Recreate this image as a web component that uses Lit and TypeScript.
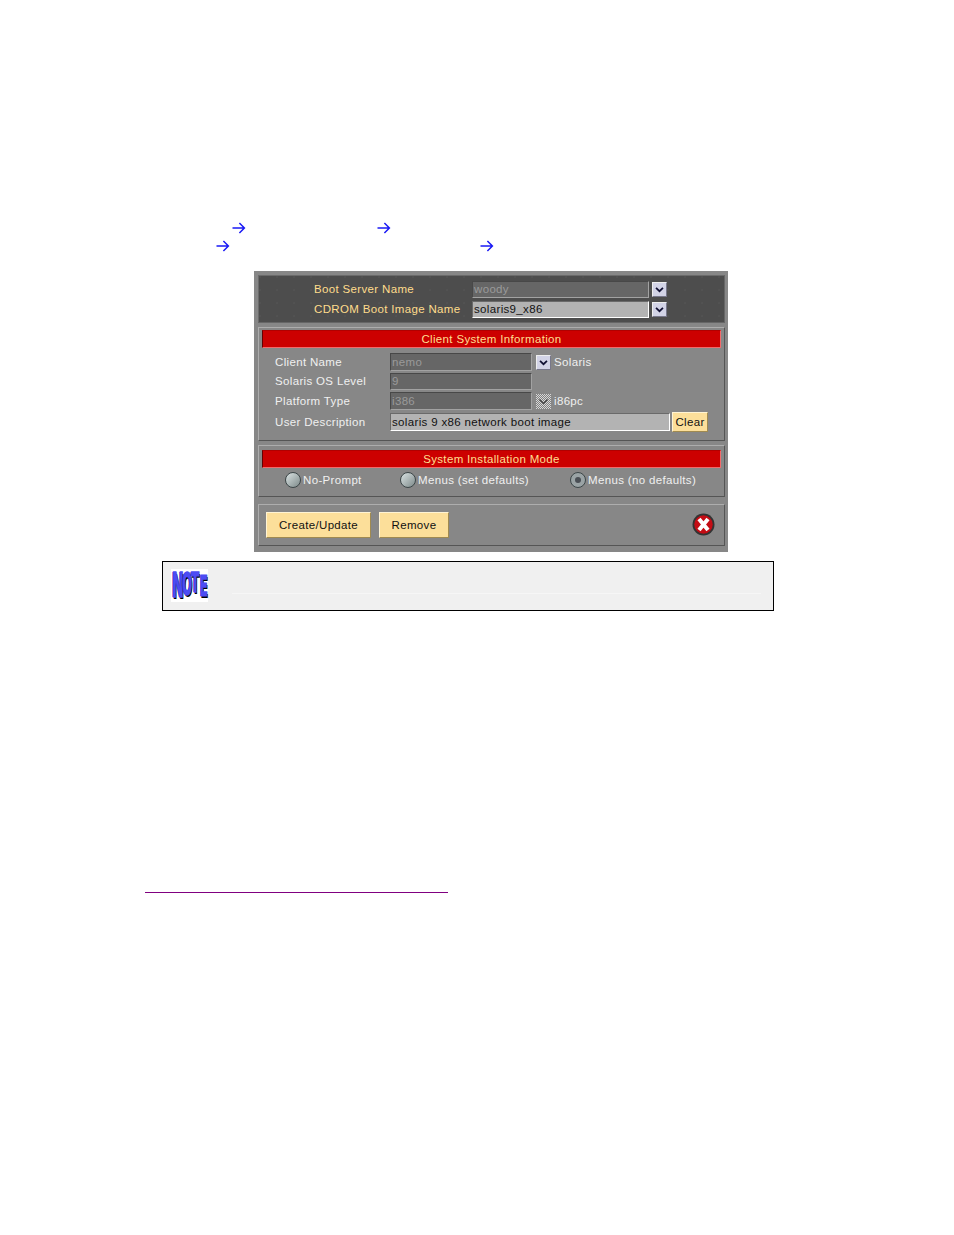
import { LitElement, html, css, svg } from "lit";
import { customElement } from "lit/decorators.js";

const arrow = html`<svg class="arrow" width="14" height="14" viewBox="0 0 14 14"><path d="M0.5 7H12M7.4 2L12.4 7L7.4 12" fill="none" stroke="#1a1af5" stroke-width="1.5"/></svg>`;
const chevron = svg`<path d="M3.5 5.5L7.5 9.5L11.5 5.5" fill="none" stroke="#111133" stroke-width="2"/>`;
const chevronOff = svg`<path d="M3.5 5.5L7.5 9.5L11.5 5.5" fill="none" stroke="#444" stroke-width="1.2"/>`;

@customElement("app-root")
export class AppRoot extends LitElement {
  static styles = css`
    :host { display: block; height: 1235px; background: #fff; font-family: "Liberation Sans", Arial, sans-serif; overflow: hidden; }
    .arrows { display: flex; height: 18px; align-items: center; }
    .arrows.first { margin-top: 219px; padding-left: 232px; gap: 131px; }
    .arrows.second { padding-left: 216px; gap: 250px; }
    .arrow { display: block; flex: none; }
    .dialog { box-sizing: border-box; width: 474px; height: 281px; margin: 16px 0 0 254px; background: #878787; padding: 4px 3px 6px 4px; display: flex; flex-direction: column; font-size: 11.5px; letter-spacing: 0.34px; color: #f0f0f0; }
    .panel { box-sizing: border-box; border: 1px solid; border-color: #adadad #555 #555 #adadad; flex: none; }
    .server { height: 48px; background-color: #4d4d4d; background-image: radial-gradient(circle at 1px 1px, #555 0.5px, transparent 1px); background-size: 17px 13px; border-color: #6b6b6b #666 #666 #6b6b6b; padding: 5px 0 0 55px; display: flex; flex-direction: column; gap: 3px; color: #ffdc8c; margin-bottom: 4px; }
    .server .row { display: flex; align-items: center; height: 17px; }
    .server .lab { width: 158px; flex: none; margin-top: -1px; }
    .server .field { width: 177px; height: 17px; line-height: 14px; }
    .server .drop { margin-left: 3px; }
    .client { height: 114px; margin-bottom: 4px; padding: 2px 3px 0; }
    .mode { height: 52px; margin-bottom: 7px; padding: 4px 3px 0; }
    .actions { height: 42px; display: flex; align-items: center; padding: 0 9px 0 7px; gap: 8px; }
    .bar { height: 18px; background: #cc0000; color: #ffdf90; text-align: center; line-height: 17px; border: 1px solid; border-color: #b00000 #f36a6a #f36a6a #600; box-sizing: border-box; }
    .rows { display: flex; flex-direction: column; gap: 2px; margin-top: 5px; padding-left: 13px; }
    .row { display: flex; align-items: center; }
    .client .row { height: 18px; }
    .client .row.short { height: 17px; }
    .client .row.short .field { height: 17px; line-height: 15px; }
    .client .row.short .lab { margin-top: -1px; }
    .client .row.desc { height: 20px; }
    .client .lab { width: 115px; flex: none; }
    .client .field { width: 142px; }
    .client .drop { margin: 0 3px 0 4px; }
    .field { box-sizing: border-box; height: 18px; line-height: 16px; padding-left: 1px; border: 1px solid; white-space: nowrap; overflow: hidden; }
    .off { background: #666; color: #9a9a9a; border-color: #484848 #a2a2a2 #a2a2a2 #484848; }
    .on { background: #b3b3b3; color: #111; border-color: #6a6a6a #fff #fff #6a6a6a; }
    .client .field.wide { width: 280px; }
    .drop { box-sizing: border-box; width: 15px; height: 15px; flex: none; background: #d2d3e6; border: 1px solid; border-color: #eee #77778a #77778a #eee; display: block; }
    .drop.dis { background: repeating-conic-gradient(#808080 0 25%, #d8d8d8 0 50%) 0 0 / 2px 2px; border: 0; }
    .btn { box-sizing: border-box; background: #fcdf9a; color: #111; border: 1px solid; border-color: #fff4d4 #a08a50 #a08a50 #fff4d4; display: flex; align-items: center; justify-content: center; flex: none; }
    .clear { width: 36px; height: 20px; margin-left: 2px; }
    .create { width: 105px; height: 26px; }
    .remove { width: 70px; height: 26px; }
    .close { margin: 0 0 2px auto; display: block; }
    .radios { display: flex; align-items: center; height: 23px; padding-left: 23px; }
    .radio { width: 16px; height: 16px; box-sizing: border-box; flex: none; border-radius: 50%; border: 1.5px solid #3c4648; background: linear-gradient(135deg, #dbe3e3, #7d8a8a); display: flex; align-items: center; justify-content: center; margin-right: 2px; }
    .radio.sel::after { content: ""; width: 6px; height: 6px; border-radius: 50%; background: #4a4f55; }
    .radio.sel { background: #9aa3a5; }
    .r1 { width: 97px; flex: none; }
    .r2 { width: 152px; flex: none; }
    .note { box-sizing: border-box; width: 612px; height: 50px; margin: 9px 0 0 162px; border: 1px solid #000; background: #f0f0f0; padding: 7px 0 0 8px; display: flex; gap: 24px; }
    .logo { width: 37px; height: 33px; background: #fff; flex: none; display: flex; align-items: center; font-family: "DejaVu Sans", sans-serif; font-weight: 700; color: #4c4cf4; }
    .logo span { display: block; flex: none; width: 9px; text-align: center; line-height: 1; font-size: 15px; -webkit-text-stroke: 0.7px #4c4cf4; text-shadow: 1px 1px 0 #000, -0.5px 0 0 #000; transform: scale(0.8, 2.1); }
    .logo .n { width: 10px; font-size: 17px; transform: scale(0.85, 1.95) translateY(0.5px); }
    .logo .t { transform: scale(0.8, 1.8) translateY(-1px); }
    .logo .e { font-size: 17px; transform: scale(0.72, 1.65) translateX(-1px) translateY(1px); }
    .rule { width: 529px; height: 1px; background: #f6f6f6; margin-top: 24px; flex: none; }
    .link { width: 303px; height: 1px; background: #800080; margin: 281px 0 0 145px; }
  `;

  private drop(disabled = false) {
    return html`<svg class="drop ${disabled ? "dis" : ""}" viewBox="0 0 15 15">${disabled ? chevronOff : chevron}</svg>`;
  }

  render() {
    return html`
      <div class="arrows first">${arrow}${arrow}</div>
      <div class="arrows second">${arrow}${arrow}</div>
      <div class="dialog">
        <div class="panel server">
          <div class="row"><span class="lab">Boot Server Name</span><div class="field off">woody</div>${this.drop()}</div>
          <div class="row"><span class="lab">CDROM Boot Image Name</span><div class="field on">solaris9_x86</div>${this.drop()}</div>
        </div>
        <div class="panel client">
          <div class="bar">Client System Information</div>
          <div class="rows">
            <div class="row"><span class="lab">Client Name</span><div class="field off">nemo</div>${this.drop()}<span>Solaris</span></div>
            <div class="row short"><span class="lab">Solaris OS Level</span><div class="field off">9</div></div>
            <div class="row"><span class="lab">Platform Type</span><div class="field off">i386</div>${this.drop(true)}<span>i86pc</span></div>
            <div class="row desc"><span class="lab">User Description</span><div class="field on wide">solaris 9 x86 network boot image</div><div class="btn clear">Clear</div></div>
          </div>
        </div>
        <div class="panel mode">
          <div class="bar">System Installation Mode</div>
          <div class="radios">
            <span class="radio"></span><span class="r1">No-Prompt</span>
            <span class="radio"></span><span class="r2">Menus (set defaults)</span>
            <span class="radio sel"></span><span>Menus (no defaults)</span>
          </div>
        </div>
        <div class="panel actions">
          <div class="btn create">Create/Update</div>
          <div class="btn remove">Remove</div>
          <svg class="close" width="23" height="23" viewBox="0 0 23 23">
            <circle cx="11.5" cy="11.5" r="11" fill="#333"/>
            <circle cx="11.5" cy="11.5" r="9.2" fill="#c40c14"/>
            <path d="M7 6L16 17M16 6L7 17" stroke="#fff" stroke-width="4"/>
          </svg>
        </div>
      </div>
      <div class="note">
        <div class="logo"><span class="n">N</span><span>O</span><span class="t">T</span><span class="e">E</span></div>
        <div class="rule"></div>
      </div>
      <div class="link"></div>
    `;
  }
}
